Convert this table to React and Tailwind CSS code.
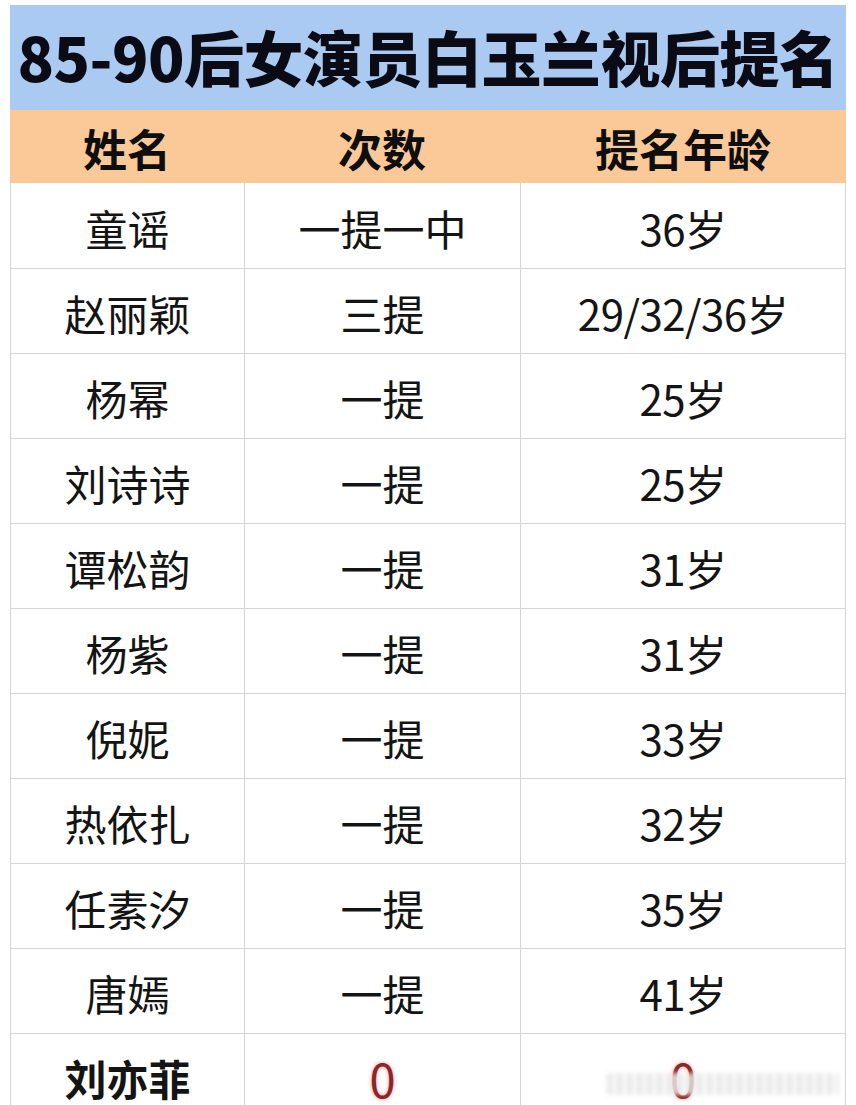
const rows = [
  { name: "童谣", times: "一提一中", age: "36岁" },
  { name: "赵丽颖", times: "三提", age: "29/32/36岁" },
  { name: "杨幂", times: "一提", age: "25岁" },
  { name: "刘诗诗", times: "一提", age: "25岁" },
  { name: "谭松韵", times: "一提", age: "31岁" },
  { name: "杨紫", times: "一提", age: "31岁" },
  { name: "倪妮", times: "一提", age: "33岁" },
  { name: "热依扎", times: "一提", age: "32岁" },
  { name: "任素汐", times: "一提", age: "35岁" },
  { name: "唐嫣", times: "一提", age: "41岁" },
];

const cols = "grid grid-cols-[234px_276px_1fr]";

export default function App() {
  return (
    <div
      className="w-[856px] h-[1105px] overflow-hidden bg-white px-[10px] pt-[5px] text-[#141414]"
      style={{ fontFamily: '"Noto Sans CJK SC", "Noto Sans", sans-serif' }}
    >
      <div className="h-[105px] bg-[#abcaf1] flex items-center justify-center">
        <h1 className="text-[60px] font-black leading-none tracking-[-0.5px] text-[#0b0b16] pb-[4px]">
          85-90后女演员白玉兰视后提名
        </h1>
      </div>

      <div className={`${cols} h-[73px] bg-[#fbc997] text-[44px] font-bold leading-none text-[#0e0e0e]`}>
        <div className="flex items-center justify-center pt-[2px]">姓名</div>
        <div className="flex items-center justify-center pt-[2px]">次数</div>
        <div className="flex items-center justify-center pt-[2px]">提名年龄</div>
      </div>

      <div className="border-x border-[#d4d4d4]">
        {rows.map((r, i) => (
          <div
            key={r.name}
            className={`${cols} border-b border-[#d4d4d4] text-[42px] leading-none ${i === 0 ? "h-[86px]" : "h-[85px]"}`}
          >
            <div className="flex items-center justify-center border-r border-[#d4d4d4] pt-[4px]">{r.name}</div>
            <div className="flex items-center justify-center border-r border-[#d4d4d4] pt-[4px]">{r.times}</div>
            <div className="flex items-center justify-center pt-[4px] tracking-[-0.5px]">{r.age}</div>
          </div>
        ))}

        <div className={`${cols} h-[85px] text-[42px] leading-none relative`}>
          <div className="flex items-center justify-center border-r border-[#d4d4d4] pt-[2px] font-bold">刘亦菲</div>
          <div className="flex items-center justify-center border-r border-[#d4d4d4] pt-[2px] text-[47px] text-[#8e2626] [text-shadow:0_0_4px_rgba(220,90,90,0.6)]">
            0
          </div>
          <div className="flex items-center justify-center pt-[2px] text-[47px] text-[#8e2626] [text-shadow:0_0_4px_rgba(220,90,90,0.6)]">
            0
          </div>
          <div className="absolute left-[596px] top-[39px] w-[232px] h-[22px] blur-[2px] bg-[repeating-linear-gradient(90deg,#e4e4e4_0px,#e4e4e4_5px,#f6f6f6_5px,#f6f6f6_10px)] opacity-80" />
        </div>
      </div>
    </div>
  );
}
